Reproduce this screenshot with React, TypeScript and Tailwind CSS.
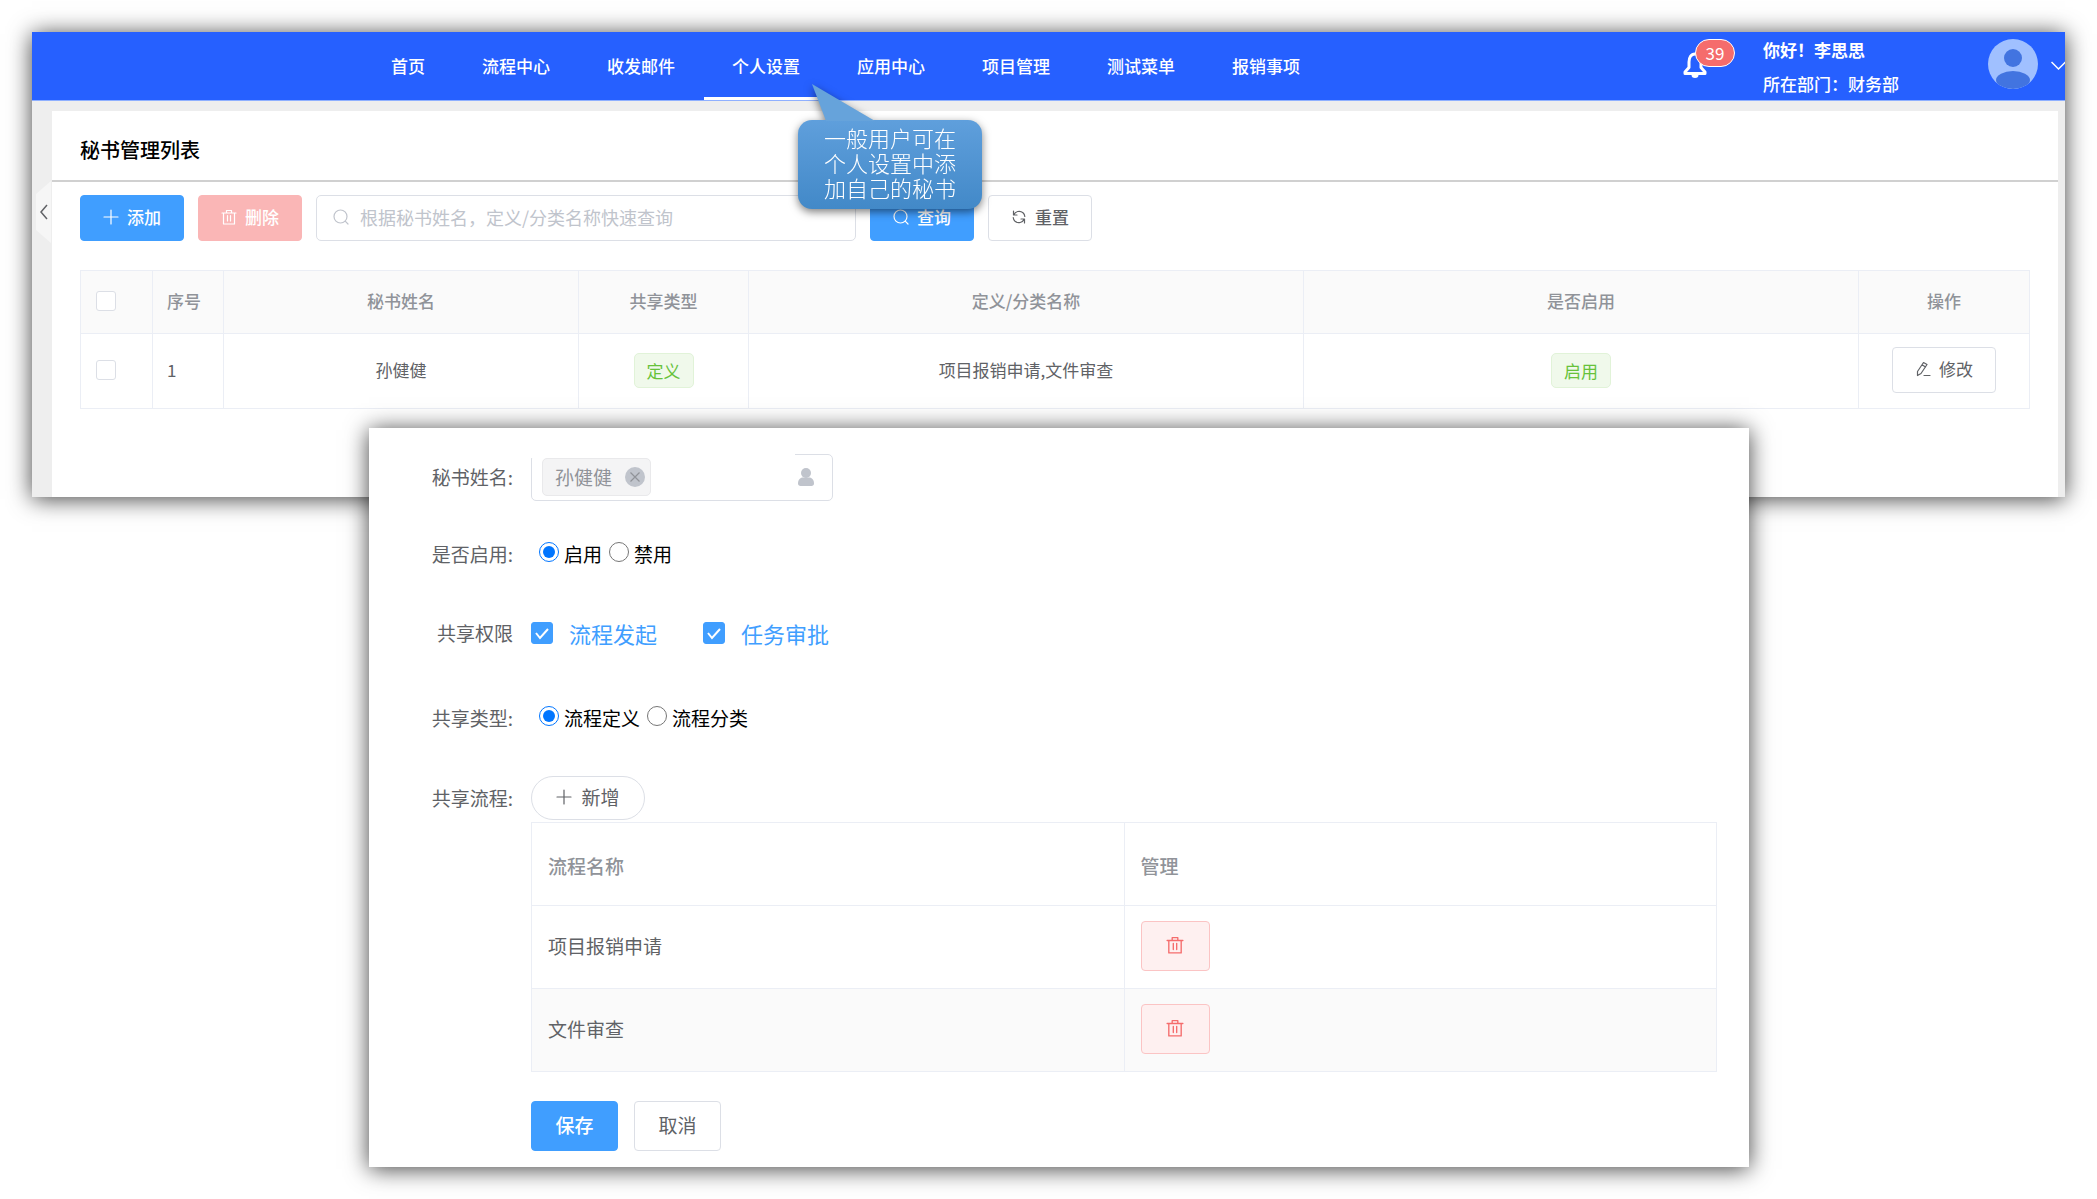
import { useState } from 'react';
import type { ReactNode } from 'react';

type IconProps = { className?: string };

const Svg = ({ className, children }: { className?: string; children: ReactNode }) => (
  <svg
    viewBox="0 0 16 16"
    fill="none"
    stroke="currentColor"
    strokeWidth="1.2"
    strokeLinecap="round"
    strokeLinejoin="round"
    className={className}
    aria-hidden="true"
  >
    {children}
  </svg>
);

const PlusIcon = ({ className }: IconProps) => (
  <Svg className={className}>
    <path d="M8 1v14M1 8h14" />
  </Svg>
);

const TrashIcon = ({ className }: IconProps) => (
  <Svg className={className}>
    <path d="M1 4h14M2.5 4v11h11V4M5.5 4V1.5h5V4M6.5 6.5v5.5M9.5 6.5v5.5" />
  </Svg>
);

const SearchIcon = ({ className }: IconProps) => (
  <Svg className={className}>
    <circle cx="7.5" cy="7.5" r="6.5" />
    <path d="M12.2 12.2l2.8 2.8" />
  </Svg>
);

const RefreshIcon = ({ className }: IconProps) => (
  <Svg className={className}>
    <path d="M2.5 2v4H6M2.8 6A5.800 5.800 0 0 1 12 3.800 5.800 5.800 0 0 1 13.800 7.500M13.500 14v-4H10M13.200 10A5.800 5.800 0 0 1 4 12.200 5.800 5.800 0 0 1 2.200 8.500" />
  </Svg>
);

const EditIcon = ({ className }: IconProps) => (
  <Svg className={className}>
    <path d="M8.500 1.500l3.500 2L6 12.500 2.500 14.500l0-4zM7 3.800l3.500 2.200M9 14.500h6" />
  </Svg>
);

const BellIcon = ({ className }: IconProps) => (
  <svg viewBox="0 0 24 28" fill="none" className={className} aria-hidden="true">
    <path
      d="M12 3C8 3 6 6.500 6 11v5.500L2 21v1.500h20V21l-4-4.500V11C18 6.500 16 3 12 3z"
      stroke="currentColor"
      strokeWidth="3"
      strokeLinejoin="round"
    />
    <path d="M8.500 24h7a3.500 3 0 0 1-7 0z" fill="currentColor" />
  </svg>
);

const AvatarIcon = ({ className }: IconProps) => (
  <svg viewBox="0 0 50 50" className={className} aria-hidden="true">
    <clipPath id="avatar">
      <circle cx="25" cy="25" r="25" />
    </clipPath>
    <g clipPath="url(#avatar)">
      <rect width="50" height="50" fill="#a0c0ff" />
      <circle cx="25" cy="19" r="9" fill="#4274e0" />
      <ellipse cx="25" cy="41" rx="17" ry="9" fill="#4274e0" />
    </g>
  </svg>
);

const UserIcon = ({ className }: IconProps) => (
  <svg viewBox="0 0 16 18" fill="currentColor" className={className} aria-hidden="true">
    <circle cx="8" cy="5" r="5" />
    <path d="M5 9.500h6c3 0 5 2.500 5 6 0 1.500-1 2.500-2.500 2.500h-11C1 18 0 17 0 15.500c0-3.500 2-6 5-6z" />
  </svg>
);

const navItems = ['首页', '流程中心', '收发邮件', '个人设置', '应用中心', '项目管理', '测试菜单', '报销事项'];

const processes = ['项目报销申请', '文件审查'];

const panelShadow = 'shadow-[0_2px_22px_rgba(0,0,0,0.75)]';
const toolButton = 'h-[46px] w-[104px] shrink-0 flex items-center justify-center gap-2 rounded-[4px] border pb-[2px] text-[17px]';
const plainButton = 'border-[#dcdfe6] bg-white text-[#606266]';
const primaryButton = 'border-[#409eff] bg-[#409eff] text-white font-medium';
const tag = 'inline-block rounded-[5px] border border-[#e1f3d8] bg-[#f0f9eb] px-3 text-[17px] leading-[33px] text-[#67c23a]';
const cell = 'border border-[#ebeef5] pb-[2px]';
const tickBox = 'block appearance-none rounded-[3px] border border-[#dcdfe6] bg-white size-5';

function Header() {
  return (
    <header className="relative flex h-[69px] items-center border-b border-[#8fb0ff] bg-[#2660ff] text-[17px] text-white">
      <nav className="ml-[331px] flex h-full gap-px">
        {navItems.map((item) => (
          <a
            key={item}
            href="#"
            className={`flex h-full items-center border-b-3 px-7 pt-[2px] font-medium ${
              item === '个人设置' ? 'border-white' : 'border-transparent'
            }`}
          >
            {item}
          </a>
        ))}
      </nav>
      <div className="ml-auto flex h-full items-center">
        <button type="button" aria-label="39" className="relative mb-[2px] mr-14 block">
          <BellIcon className="h-7 w-6" />
          <span className="absolute -top-3 left-3 flex h-7 w-10 items-center justify-center rounded-full border border-white bg-[#f56c6c] text-[17px]">
            39
          </span>
        </button>
        <div className="w-[225px] pt-[2px] leading-[34px]">
          <p className="font-bold">你好！李思思</p>
          <p className="font-medium">所在部门：财务部</p>
        </div>
        <AvatarIcon className="mb-1 size-[50px]" />
        <svg viewBox="0 0 14 10" className="ml-[13px] h-[10px] w-[14px]" fill="none" stroke="white" aria-hidden="true">
          <path d="M0.500 1l7 7 7-7" strokeWidth="1.500" />
        </svg>
      </div>
      <div className="absolute left-[766px] top-[88px] z-10 drop-shadow-[0_3px_4px_rgba(0,0,0,0.5)]">
        <svg viewBox="0 0 80 37" className="absolute -top-9 left-3 h-[37px] w-20" aria-hidden="true">
          <path d="M2 0L65 37H16z" fill="#66a3db" />
        </svg>
        <p className="w-[184px] rounded-[14px] bg-linear-to-b from-[#5f9fdc] to-[#4289c8] px-[26px] py-[7px] font-['Liberation_Sans','Noto_Sans_CJK_SC',sans-serif] text-[22px] font-light leading-[25px]">
          一般用户可在
          <br />
          个人设置中添
          <br />
          加自己的秘书
        </p>
      </div>
    </header>
  );
}

function SecretaryList() {
  const [keyword, setKeyword] = useState('');

  return (
    <section className="min-w-0 flex-1 bg-white pb-[88px]">
      <h1 className="border-b-2 border-[#d0d0d0] pb-4 pl-7 pt-6 text-[20px] font-medium leading-[29px] text-black">
        秘书管理列表
      </h1>
      <div className="px-7 pt-[13px]">
        <div className="flex gap-[14px]">
          <button type="button" className={`${toolButton} ${primaryButton}`}>
            <PlusIcon className="size-4" />
            添加
          </button>
          <button
            type="button"
            className={`${toolButton} border-[#fab6b6] bg-[#fab6b6] font-medium text-white`}
          >
            <TrashIcon className="size-4" />
            删除
          </button>
          <label className="flex h-[46px] w-[540px] items-center gap-[11px] rounded-[5px] border border-[#dcdfe6] px-4 pb-[2px] text-[#c0c4cc]">
            <SearchIcon className="size-4 shrink-0" />
            <input
              type="text"
              aria-label="根据秘书姓名，定义/分类名称快速查询"
              placeholder="根据秘书姓名，定义/分类名称快速查询"
              value={keyword}
              onChange={(e) => setKeyword(e.target.value)}
              className="min-w-0 flex-1 text-[18px] text-[#606266] outline-none placeholder:text-[#c0c4cc]"
            />
          </label>
          <button type="button" className={`${toolButton} ${primaryButton}`}>
            <SearchIcon className="size-4" />
            查询
          </button>
          <button type="button" className={`${toolButton} ${plainButton} font-medium`}>
            <RefreshIcon className="size-4" />
            重置
          </button>
        </div>

        <table className="mt-[29px] w-full table-fixed border-collapse text-center text-[17px] text-[#606266]">
          <colgroup>
            <col className="w-[72px]" />
            <col className="w-[71px]" />
            <col className="w-[355px]" />
            <col className="w-[170px]" />
            <col />
            <col />
            <col className="w-[171px]" />
          </colgroup>
          <thead>
            <tr className="h-[63px] bg-[#fafafa] text-[#909399]">
              <th className={`${cell} px-[15px]`}>
                <input type="checkbox" aria-label="全选" className={tickBox} />
              </th>
              <th className={`${cell} px-[14px] text-left font-medium`}>序号</th>
              <th className={`${cell} font-medium`}>秘书姓名</th>
              <th className={`${cell} font-medium`}>共享类型</th>
              <th className={`${cell} font-medium`}>定义/分类名称</th>
              <th className={`${cell} font-medium`}>是否启用</th>
              <th className={`${cell} font-medium`}>操作</th>
            </tr>
          </thead>
          <tbody>
            <tr className="h-[75px]">
              <td className={`${cell} px-[15px]`}>
                <input type="checkbox" aria-label="孙健健" className={tickBox} />
              </td>
              <td className={`${cell} px-[14px] text-left`}>1</td>
              <td className={cell}>孙健健</td>
              <td className={cell}>
                <span className={tag}>定义</span>
              </td>
              <td className={cell}>项目报销申请,文件审查</td>
              <td className={cell}>
                <span className={tag}>启用</span>
              </td>
              <td className={cell}>
                <button type="button" className={`${toolButton} ${plainButton} mx-auto`}>
                  <EditIcon className="size-4" />
                  修改
                </button>
              </td>
            </tr>
          </tbody>
        </table>
      </div>
    </section>
  );
}

function FormRow({ label, className, children }: { label: string; className: string; children: ReactNode }) {
  return (
    <div className={`flex items-center ${className}`}>
      <span className="mr-[18px] w-36 shrink-0 text-right text-[#606266]">{label}</span>
      {children}
    </div>
  );
}

function Radio({ name, label, defaultChecked }: { name: string; label: string; defaultChecked?: boolean }) {
  return (
    <label className="flex items-center gap-[5px] text-black">
      <input type="radio" name={name} defaultChecked={defaultChecked} className="mb-1 size-5 accent-[#0075ff]" />
      {label}
    </label>
  );
}

function Permission({ label }: { label: string }) {
  return (
    <label className="flex items-center gap-4 text-[22px] text-[#409eff]">
      <span className="relative">
        <input
          type="checkbox"
          defaultChecked
          className="peer block size-[22px] appearance-none rounded-[3px] border border-[#dcdfe6] checked:border-[#409eff] checked:bg-[#409eff]"
        />
        <svg
          viewBox="0 0 22 22"
          className="pointer-events-none absolute inset-0 hidden peer-checked:block"
          fill="none"
          stroke="white"
          strokeWidth="2"
          aria-hidden="true"
        >
          <path d="M5 11l4 5 8-9" />
        </svg>
      </span>
      {label}
    </label>
  );
}

function SecretaryForm() {
  return (
    <form
      className={`relative -mt-[69px] ml-[369px] mr-[348px] bg-white pb-4 pr-8 pt-[25px] text-[19px] leading-[28px] ${panelShadow}`}
      onSubmit={(e) => e.preventDefault()}
    >
      <FormRow label="秘书姓名:" className="h-12">
        <div className="relative flex h-[47px] w-[302px] items-center justify-between rounded-[5px] border border-[#dcdfe6] pl-[10px] pr-[18px]">
          {/* the tag strip hides the left part of the top border */}
          <div className="absolute -left-px -top-px h-1 w-[264px] bg-white" />
          <span className="flex h-[38px] items-center gap-[13px] rounded-[5px] border border-[#e9e9eb] bg-[#f4f4f5] pl-3 pr-[5px] text-[#909399]">
            孙健健
            <button type="button" aria-label="移除" className="flex size-5 items-center justify-center rounded-full bg-[#c0c4cc]">
              <svg viewBox="0 0 10 10" className="size-[10px]" stroke="#909399" strokeWidth="1.200" aria-hidden="true">
                <path d="M0.500 0.500l9 9M9.500 0.500l-9 9" />
              </svg>
            </button>
          </span>
          <UserIcon className="h-[18px] w-4 text-[#c0c4cc]" />
        </div>
      </FormRow>

      <FormRow label="是否启用:" className="mt-[39px]">
        <div className="flex gap-[7px] pl-2">
          <Radio name="enabled" label="启用" defaultChecked />
          <Radio name="enabled" label="禁用" />
        </div>
      </FormRow>

      <FormRow label="共享权限" className="mt-[51px]">
        <div className="flex gap-[46px]">
          <Permission label="流程发起" />
          <Permission label="任务审批" />
        </div>
      </FormRow>

      <FormRow label="共享类型:" className="mt-[57px]">
        <div className="flex gap-[7px] pl-2">
          <Radio name="shareType" label="流程定义" defaultChecked />
          <Radio name="shareType" label="流程分类" />
        </div>
      </FormRow>

      <FormRow label="共享流程:" className="mt-[44px]">
        <button
          type="button"
          className={`flex h-11 w-[114px] items-center justify-center gap-[9px] rounded-full border pb-[2px] ${plainButton}`}
        >
          <PlusIcon className="size-4" />
          新增
        </button>
      </FormRow>

      <div className="ml-[162px] mt-[2px]">
        <table className="w-full table-fixed border-collapse text-left text-[#606266]">
          <thead>
            <tr className="h-[83px] text-[#909399]">
              <th className={`${cell} px-4 pt-[6px] font-medium`}>流程名称</th>
              <th className={`${cell} px-4 pt-[6px] font-medium`}>管理</th>
            </tr>
          </thead>
          <tbody>
            {processes.map((name) => (
              <tr key={name} className="h-[83px] even:bg-[#fafafa]">
                <td className={`${cell} px-4`}>{name}</td>
                <td className={`${cell} px-4`}>
                  <button
                    type="button"
                    aria-label={`删除${name}`}
                    className="flex h-[50px] w-[69px] items-center justify-center rounded-[4px] border border-[#fbc4c4] bg-[#fef0f0] pb-[2px] text-[#f56c6c]"
                  >
                    <TrashIcon className="size-[18px]" />
                  </button>
                </td>
              </tr>
            ))}
          </tbody>
        </table>
        <div className="mt-[29px] flex gap-4">
          <button type="submit" className={`h-[50px] w-[87px] rounded-[4px] border pb-[2px] ${primaryButton}`}>
            保存
          </button>
          <button type="button" className={`h-[50px] w-[87px] rounded-[4px] border pb-[2px] ${plainButton}`}>
            取消
          </button>
        </div>
      </div>
    </form>
  );
}

export default function App() {
  return (
    <div className="flow-root min-h-screen bg-white pb-8 font-['Noto_Sans_CJK_SC',sans-serif]">
      <main>
        <div className={`mx-8 mt-8 bg-[#eeeeee] ${panelShadow}`}>
          <Header />
          <div className="flex pr-[7px] pt-[10px]">
            <aside className="w-5 shrink-0 pl-1 pt-[70px]">
              <button type="button" aria-label="收起" className="block">
                <svg viewBox="0 0 15 62" className="h-[62px] w-[15px]" aria-hidden="true">
                  <path d="M15 0L0 13v36l15 13z" fill="#f6f6f6" />
                  <path d="M11 24l-6 7 6 7" fill="none" stroke="#606266" strokeWidth="1.500" />
                </svg>
              </button>
            </aside>
            <SecretaryList />
          </div>
        </div>
        <SecretaryForm />
      </main>
    </div>
  );
}
